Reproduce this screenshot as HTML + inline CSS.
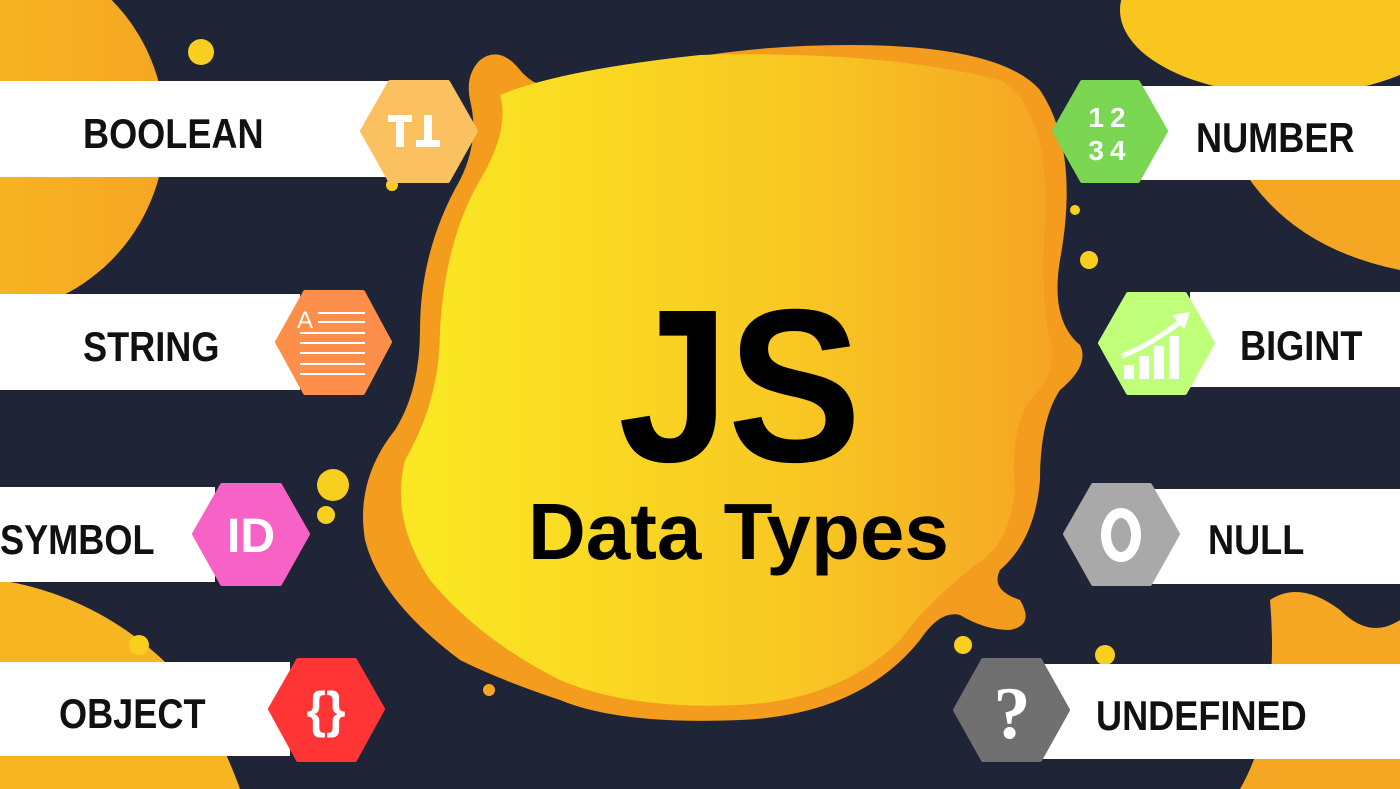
<!DOCTYPE html>
<html><head><meta charset="utf-8"><style>
html,body{margin:0;padding:0;}
body{width:1400px;height:789px;overflow:hidden;background:#1f2536;position:relative;font-family:"Liberation Sans",sans-serif;}
svg{position:absolute;left:0;top:0;}
.bar{position:absolute;background:#fff;}
.lbl{position:absolute;font-family:"Liberation Sans Narrow","Liberation Sans",sans-serif;font-weight:bold;font-size:42px;color:#111;letter-spacing:0px;transform:scaleX(0.86);transform-origin:left center;line-height:1;}
.t{position:absolute;font-weight:bold;color:#000;line-height:1;}
</style></head><body>
<svg width="1400" height="789" viewBox="0 0 1400 789">
<defs>
<linearGradient id="g" x1="0" x2="1" y1="0" y2="0"><stop offset="0" stop-color="#fbe922"/><stop offset="0.6" stop-color="#f8c823"/><stop offset="1" stop-color="#f5a523"/></linearGradient>
<linearGradient id="c" x1="0" x2="1"><stop offset="0" stop-color="#f9c31f"/><stop offset="1" stop-color="#f5a623"/></linearGradient>
</defs>
<circle cx="-20" cy="130" r="185" fill="url(#c)"/>
<ellipse cx="1290" cy="10" rx="170" ry="85" fill="#f9c51f"/>
<path d="M1250 180 Q1300 250 1400 270 L1400 160 Q1320 170 1250 180Z" fill="#f5a623"/>
<path d="M0 580 Q120 600 200 700 Q230 760 240 789 L0 789Z" fill="#f7b522"/>
<path d="M1270 600 Q1300 580 1340 610 Q1370 640 1400 620 L1400 789 L1240 789 Q1280 720 1270 600Z" fill="#f5a623"/>
<circle cx="201" cy="52" r="13" fill="#f9cf1f"/>
<circle cx="392" cy="185" r="6" fill="#f9cf1f"/>
<circle cx="333" cy="485" r="16" fill="#f9cf1f"/>
<circle cx="326" cy="515" r="9" fill="#f9cf1f"/>
<circle cx="139" cy="645" r="10" fill="#f9cf1f"/>
<circle cx="489" cy="690" r="6" fill="#f5a623"/>
<circle cx="1089" cy="260" r="9" fill="#f9cf1f"/>
<circle cx="1075" cy="210" r="5" fill="#f9cf1f"/>
<circle cx="963" cy="645" r="9" fill="#f9cf1f"/>
<circle cx="1105" cy="655" r="10" fill="#f9cf1f"/>
<path d="M480 60 Q500 45 520 70 Q540 95 580 85 Q700 45 850 45 Q1000 45 1040 90 Q1080 150 1060 260 Q1050 320 1080 345 Q1090 365 1060 390 Q1040 420 1040 480 Q1035 540 1000 570 Q990 590 1020 600 Q1035 625 1010 630 Q985 630 960 615 Q940 610 920 640 Q860 715 740 720 Q620 725 560 700 Q500 680 460 660 Q380 600 365 540 Q355 480 395 430 Q420 390 420 330 Q420 250 460 180 Q480 140 470 100 Q465 75 480 60Z" fill="#f39c1e"/>
<path d="M500 95 Q560 70 700 55 Q880 50 1000 80 Q1050 110 1045 220 Q1040 300 1050 340 Q1060 370 1030 400 Q1010 430 1015 490 Q1010 545 975 565 Q930 600 900 640 Q840 700 740 705 Q630 710 560 680 Q480 640 430 580 Q390 520 405 460 Q440 400 440 330 Q445 240 480 180 Q510 130 500 95Z" fill="url(#g)"/>
</svg>

<div class="t" style="left:618px;top:278px;font-size:218px;letter-spacing:-2px;transform:scaleX(0.92);transform-origin:left;">JS</div>
<div class="t" style="left:528px;top:492px;font-size:80px;letter-spacing:0px;">Data Types</div>

<div class="bar" style="left:0;top:81px;width:395px;height:96px;"></div>
<div class="lbl" style="left:83px;top:113px;">BOOLEAN</div>
<div class="bar" style="left:0;top:294px;width:300px;height:96px;"></div>
<div class="lbl" style="left:83px;top:326px;">STRING</div>
<div class="bar" style="left:0;top:487px;width:215px;height:95px;"></div>
<div class="lbl" style="left:0px;top:519px;">SYMBOL</div>
<div class="bar" style="left:0;top:662px;width:290px;height:94px;"></div>
<div class="lbl" style="left:59px;top:693px;">OBJECT</div>
<div class="bar" style="left:1140px;top:86px;width:260px;height:94px;"></div>
<div class="lbl" style="left:1196px;top:117px;">NUMBER</div>
<div class="bar" style="left:1190px;top:292px;width:210px;height:95px;"></div>
<div class="lbl" style="left:1240px;top:325px;">BIGINT</div>
<div class="bar" style="left:1150px;top:489px;width:250px;height:95px;"></div>
<div class="lbl" style="left:1208px;top:519px;">NULL</div>
<div class="bar" style="left:1040px;top:664px;width:360px;height:95px;"></div>
<div class="lbl" style="left:1096px;top:695px;">UNDEFINED</div>

<svg width="1400" height="789" viewBox="0 0 1400 789">
<g stroke-linejoin="round" stroke-width="4">
<polygon points="390,82 448,82 476,131 448,181 390,181 362,131" fill="#fbc060" stroke="#fbc060"/>
<polygon points="305,292 363,292 390,342 363,393 305,393 277,342" fill="#fd8f4a" stroke="#fd8f4a"/>
<polygon points="222,485 280,485 308,534 280,584 222,584 194,534" fill="#f762c6" stroke="#f762c6"/>
<polygon points="298,660 355,660 383,709 355,760 298,760 270,709" fill="#ff3535" stroke="#ff3535"/>
<polygon points="1082,82 1138,82 1166,131 1138,181 1082,181 1054,131" fill="#7ad653" stroke="#7ad653"/>
<polygon points="1128,294 1185,294 1213,343 1185,393 1128,393 1100,343" fill="#bfff7a" stroke="#bfff7a"/>
<polygon points="1093,485 1150,485 1178,534 1150,584 1093,584 1065,534" fill="#a9a9a9" stroke="#a9a9a9"/>
<polygon points="983,660 1040,660 1068,710 1040,760 983,760 955,710" fill="#707070" stroke="#707070"/>
</g>
<g fill="#fff"><rect x="388" y="115" width="24" height="7"/><rect x="396" y="115" width="8" height="32"/><rect x="416" y="140" width="24" height="7"/><rect x="424" y="115" width="8" height="32"/></g>
<text x="297" y="328" font-family="Liberation Sans" font-size="24" fill="#fff">A</text>
<g stroke="#fff" stroke-width="2"><line x1="318" y1="313" x2="365" y2="313"/><line x1="318" y1="322" x2="365" y2="322"/><line x1="300" y1="333" x2="365" y2="333"/><line x1="300" y1="343" x2="365" y2="343"/><line x1="300" y1="353" x2="365" y2="353"/><line x1="300" y1="364" x2="365" y2="364"/><line x1="300" y1="374" x2="365" y2="374"/></g>
<text x="251" y="552" text-anchor="middle" font-family="Liberation Sans" font-weight="bold" font-size="48" fill="#fff">ID</text>
<text x="326" y="727" text-anchor="middle" font-family="Liberation Sans" font-weight="bold" font-size="50" fill="#fff">{}</text>
<text x="1110" y="127" text-anchor="middle" font-family="Liberation Sans" font-weight="bold" font-size="28" fill="#fff" letter-spacing="6">12</text>
<text x="1110" y="160" text-anchor="middle" font-family="Liberation Sans" font-weight="bold" font-size="28" fill="#fff" letter-spacing="6">34</text>
<g fill="#fff"><rect x="1124" y="365" width="10" height="14"/><rect x="1139" y="356" width="10" height="23"/><rect x="1154" y="346" width="10" height="33"/><rect x="1169" y="336" width="10" height="43"/></g>
<path d="M1122 356 Q1150 345 1180 322" stroke="#fff" stroke-width="5" fill="none"/>
<polygon points="1172,315 1190,312 1184,330" fill="#fff"/>
<ellipse cx="1121" cy="535" rx="15" ry="22" fill="none" stroke="#fff" stroke-width="10"/>
<text x="1012" y="738" text-anchor="middle" font-family="Liberation Serif" font-weight="bold" font-size="74" fill="#fff">?</text>
</svg>
</body></html>
